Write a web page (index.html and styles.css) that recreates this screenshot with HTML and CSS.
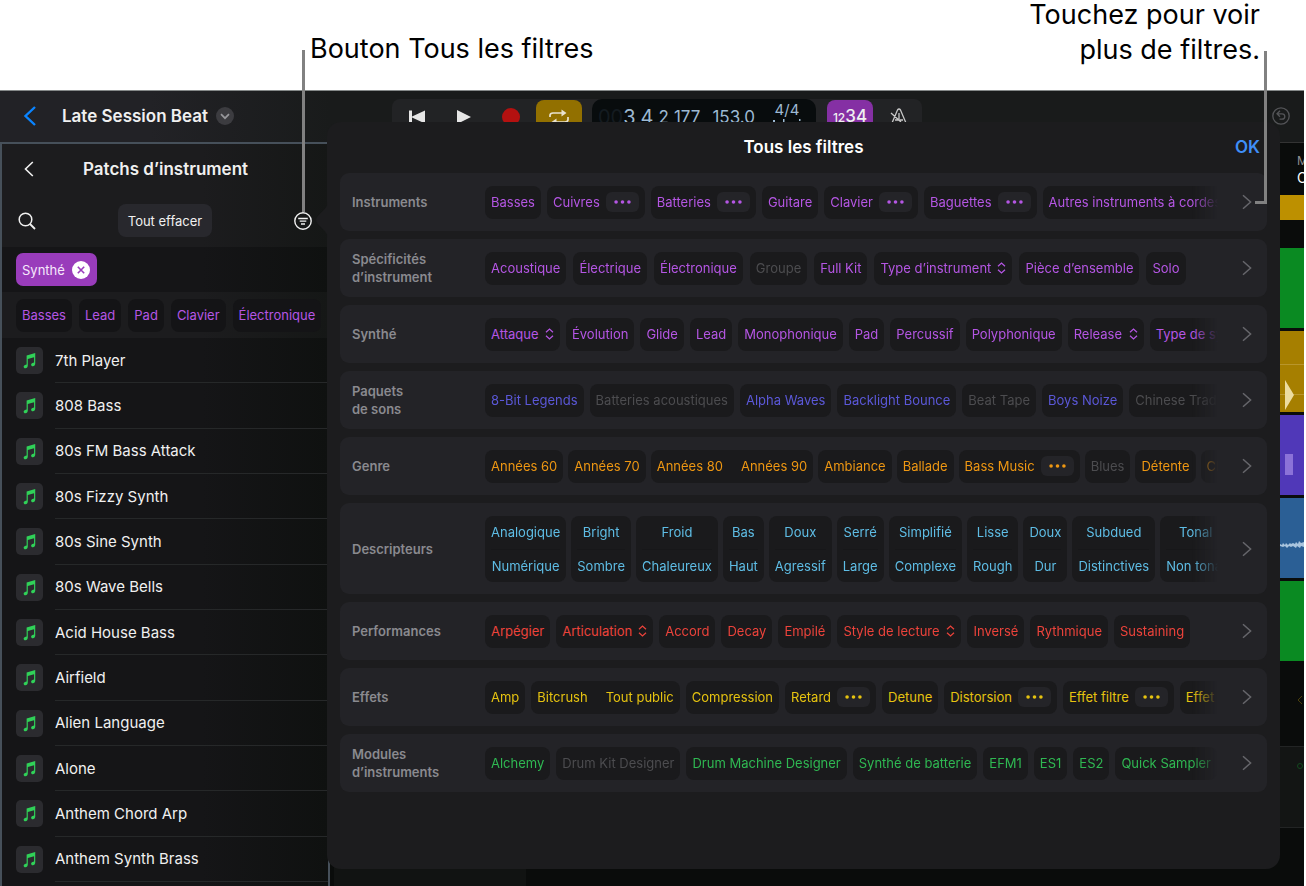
FILE: index.html
```html
<!DOCTYPE html>
<html lang="fr">
<head>
<meta charset="utf-8">
<title>Tous les filtres</title>
<link rel="stylesheet" href="styles.css">
</head>
<body>
<svg class="defs" aria-hidden="true">
  <symbol id="note" viewBox="0 0 14 16"><path d="M4.3 3.4 12.4 1v9.9c0 1.5-.9 2.5-2.2 2.6-1 .1-1.700-.5-1.700-1.400 0-1.100.9-1.700 2-1.900.6-.1.800-.3.800-.8V5L5.400 6.600v6.100c0 1.500-.9 2.500-2.200 2.600-1 .1-1.700-.5-1.700-1.400 0-1.100.9-1.700 2-1.900.6-.1.800-.3.800-.8z" fill="#30d158"/></symbol>
  <symbol id="next" viewBox="0 0 10 16"><path d="M1 1.200 8.600 8 1 14.800" fill="none" stroke="currentColor" stroke-width="1.500"/></symbol>
  <symbol id="dots" viewBox="0 0 18 4"><circle cx="2.200" cy="2" r="1.900"/><circle cx="9" cy="2" r="1.900"/><circle cx="15.800" cy="2" r="1.900"/></symbol>
  <symbol id="updown" viewBox="0 0 9 12"><path d="M1 4.300 4.500 1 8 4.300M1 7.700 4.500 11 8 7.700" fill="none" stroke="currentColor" stroke-width="1.200"/></symbol>
</svg>

<header class="captions">
  <p class="caption caption-left">Bouton Tous les filtres</p>
  <p class="caption caption-right">Touchez pour voir<br>plus de filtres.</p>
</header>

<main class="app">
  <div class="toolbar">
    <div class="project">
      <button class="icon-btn back" aria-label="Retour"><svg width="14" height="22" viewBox="0 0 14 22"><path d="M13 2 3.500 11 13 20" fill="none" stroke="#0a84ff" stroke-width="2.400"/></svg></button>
      <h1>Late Session Beat</h1>
      <button class="icon-btn project-menu" aria-label="Menu du projet"><svg width="18" height="18" viewBox="0 0 18 18"><circle cx="9" cy="9" r="9" fill="#3c3c40"/><path d="M5 7.200 9 11.200 13 7.200" fill="none" stroke="#98989c" stroke-width="1.700"/></svg></button>
    </div>
    <div class="transport">
      <button class="icon-btn" aria-label="Début"><svg width="18" height="16" viewBox="0 0 18 16"><path d="M1 1.500h3v6L17 1.500v13L4 8.500v6H1z" fill="#e6e6e6"/></svg></button>
      <button class="icon-btn" aria-label="Lecture"><svg width="14" height="16" viewBox="0 0 14 16"><path d="M0 1 14 8 0 15z" fill="#e6e6e6"/></svg></button>
      <button class="icon-btn" aria-label="Enregistrer"><svg width="18" height="18" viewBox="0 0 18 18"><circle cx="9" cy="9" r="9" fill="#b41110"/></svg></button>
      <button class="icon-btn loop" aria-label="Boucle"><svg width="20" height="18" viewBox="0 0 20 18"><path d="M1 8V6.500Q1 4 4 4h11M19 8v2.500q0 2.500-3 2.500H5" fill="none" stroke="#e9e2cf" stroke-width="1.700"/><path d="M12.500.5 17.500 4l-5 3.500zM7.500 9.500l-5 3.500 5 3.500z" fill="#e9e2cf"/></svg></button>
      <div class="lcd">
        <span class="big"><i>00</i>3</span><span class="big">4</span><span class="mid">2</span><span class="mid">177</span>
        <span class="tempo">153.0</span>
        <span class="sig">4/4<svg width="30" height="8" viewBox="0 0 30 8"><path d="M1 3h2v2H1zM11 2h1.500v3H11zM27 2h1.500v2H27z" fill="#9db9d2"/></svg></span>
      </div>
      <button class="icon-btn count"><small>12</small>34</button>
      <button class="icon-btn" aria-label="Métronome"><svg width="18" height="18" viewBox="0 0 18 18"><path d="M2 15 7.500 2Q9 0 10.500 2L16 15zM5 12h8M9 5v6M1 5l10 9" fill="none" stroke="#c8c8c8" stroke-width="1.300"/></svg></button>
    </div>
    <button class="icon-btn undo" aria-label="Annuler"><svg width="18" height="18" viewBox="0 0 18 18"><circle cx="9" cy="9" r="8.200" fill="none" stroke="#545558" stroke-width="1.300"/><path d="M8 3.800 5 6.800 8 9.800M5.200 6.800h4.800q2.800 0 2.800 2.700T10 12.200H7.500" fill="none" stroke="#545558" stroke-width="1.300"/></svg></button>
  </div>

  <div class="workspace">
    <aside class="sidebar">
      <div class="side-head">
        <button class="icon-btn side-back" aria-label="Retour"><svg width="10" height="16" viewBox="0 0 10 16"><path d="M8.800 1 1.500 8l7.300 7" fill="none" stroke="#f0f0f0" stroke-width="1.600"/></svg></button>
        <h2>Patchs d’instrument</h2>
      </div>
      <div class="side-tools">
        <button class="icon-btn" aria-label="Rechercher"><svg width="18" height="18" viewBox="0 0 18 18"><circle cx="7.500" cy="7.500" r="6.300" fill="none" stroke="#f0f0f0" stroke-width="1.500"/><path d="m12 12 5 5" stroke="#f0f0f0" stroke-width="1.800"/></svg></button>
        <button class="clear">Tout effacer</button>
        <button class="icon-btn" aria-label="Tous les filtres"><svg width="18" height="18" viewBox="0 0 18 18"><circle cx="9" cy="9" r="8.200" fill="none" stroke="#f0f0f0" stroke-width="1.400"/><path d="M4.200 6.500h9.600M5.700 9.200h6.600M7 12h4" stroke="#f0f0f0" stroke-width="1.300"/></svg></button>
      </div>
      <div class="active-filters">
        <button class="active-chip">Synthé<svg width="18" height="18" viewBox="0 0 18 18"><circle cx="9" cy="9" r="9" fill="#fff"/><path d="m5.800 5.800 6.400 6.400M12.200 5.800l-6.400 6.400" stroke="#993cbb" stroke-width="1.600"/></svg></button>
      </div>
      <div class="quick-filters purple">
        <button class="chip">Basses</button><button class="chip">Lead</button><button class="chip">Pad</button><button class="chip">Clavier</button><button class="chip">Électronique</button>
      </div>
      <ul class="patches">
        <li><svg><use href="#note"/></svg><span>7th Player</span></li>
        <li><svg><use href="#note"/></svg><span>808 Bass</span></li>
        <li><svg><use href="#note"/></svg><span>80s FM Bass Attack</span></li>
        <li><svg><use href="#note"/></svg><span>80s Fizzy Synth</span></li>
        <li><svg><use href="#note"/></svg><span>80s Sine Synth</span></li>
        <li><svg><use href="#note"/></svg><span>80s Wave Bells</span></li>
        <li><svg><use href="#note"/></svg><span>Acid House Bass</span></li>
        <li><svg><use href="#note"/></svg><span>Airfield</span></li>
        <li><svg><use href="#note"/></svg><span>Alien Language</span></li>
        <li><svg><use href="#note"/></svg><span>Alone</span></li>
        <li><svg><use href="#note"/></svg><span>Anthem Chord Arp</span></li>
        <li><svg><use href="#note"/></svg><span>Anthem Synth Brass</span></li>
      </ul>
    </aside>
    <div class="track-heads"></div>
    <div class="tracks">
      <div class="track-info"><span>M</span><b>O</b></div>
      <div class="cycle"></div>
      <div class="ruler"></div>
      <div class="region green-region"></div>
      <div class="region gold-region"><svg width="9" height="30" viewBox="0 0 9 30"><path d="M0 0 9 15 0 30z" fill="#ecdca0"/></svg></div>
      <div class="region violet-region"><i></i></div>
      <div class="region blue-region"><svg width="24" height="8" viewBox="0 0 24 8"><path d="M0 3 2 4 3 2 5 4 6 2 8 4 10 2 11 3 13 2 15 3 16 1 18 3 19 0 21 2 24 1V6L21 5 20 7 17 5 16 7 13 5 11 6 9 5 7 7 5 5 3 6 0 5z" fill="#a9c4de"/></svg></div>
      <div class="region green-region"></div>
      <div class="empty"><svg width="6" height="10" viewBox="0 0 6 10"><path d="M5 1 1 5l4 4" fill="none" stroke="#4a3f0c"/></svg></div>
      <div class="empty lit"><svg width="6" height="10" viewBox="0 0 6 10"><circle cx="3" cy="5" r="2.500" fill="none" stroke="#14481f"/></svg></div>
    </div>
  </div>

  <section class="dialog" aria-labelledby="dlg-title">
    <svg class="beak" width="13" height="36" viewBox="0 0 13 36"><path d="M13 0C13 7 1 13 1 18s12 11 12 18z" fill="#1c1c1e"/></svg>
    <header class="dialog-head">
      <h2 id="dlg-title">Tous les filtres</h2>
      <button class="ok">OK</button>
    </header>
    <div class="filters">
      <div class="row purple">
        <h3>Instruments</h3>
        <div class="strip">
          <button class="chip">Basses</button>
          <div class="chip"><button>Cuivres</button><button class="more" aria-label="Plus"><svg><use href="#dots"/></svg></button></div>
          <div class="chip"><button>Batteries</button><button class="more" aria-label="Plus"><svg><use href="#dots"/></svg></button></div>
          <button class="chip">Guitare</button>
          <div class="chip"><button>Clavier</button><button class="more" aria-label="Plus"><svg><use href="#dots"/></svg></button></div>
          <div class="chip"><button>Baguettes</button><button class="more" aria-label="Plus"><svg><use href="#dots"/></svg></button></div>
          <button class="chip">Autres instruments à cordes</button>
        </div>
        <button class="icon-btn next" aria-label="Suite"><svg><use href="#next"/></svg></button>
      </div>
      <div class="row purple loose">
        <h3>Spécificités d’instrument</h3>
        <div class="strip">
          <button class="chip">Acoustique</button>
          <button class="chip">Électrique</button>
          <button class="chip">Électronique</button>
          <button class="chip" disabled>Groupe</button>
          <button class="chip">Full Kit</button>
          <div class="chip"><select aria-label="Type d’instrument"><option>Type d’instrument</option></select><svg class="ud"><use href="#updown"/></svg></div>
          <button class="chip">Pièce d’ensemble</button>
          <button class="chip">Solo</button>
        </div>
        <button class="icon-btn next" aria-label="Suite"><svg><use href="#next"/></svg></button>
      </div>
      <div class="row purple">
        <h3>Synthé</h3>
        <div class="strip">
          <div class="chip"><select aria-label="Attaque"><option>Attaque</option></select><svg class="ud"><use href="#updown"/></svg></div>
          <button class="chip">Évolution</button>
          <button class="chip">Glide</button>
          <button class="chip">Lead</button>
          <button class="chip">Monophonique</button>
          <button class="chip">Pad</button>
          <button class="chip">Percussif</button>
          <button class="chip">Polyphonique</button>
          <div class="chip"><select aria-label="Release"><option>Release</option></select><svg class="ud"><use href="#updown"/></svg></div>
          <button class="chip">Type de synthé</button>
        </div>
        <button class="icon-btn next" aria-label="Suite"><svg><use href="#next"/></svg></button>
      </div>
      <div class="row indigo">
        <h3>Paquets<br>de sons</h3>
        <div class="strip">
          <button class="chip">8-Bit Legends</button>
          <button class="chip" disabled>Batteries acoustiques</button>
          <button class="chip">Alpha Waves</button>
          <button class="chip">Backlight Bounce</button>
          <button class="chip" disabled>Beat Tape</button>
          <button class="chip">Boys Noize</button>
          <button class="chip" disabled>Chinese Traditional</button>
        </div>
        <button class="icon-btn next" aria-label="Suite"><svg><use href="#next"/></svg></button>
      </div>
      <div class="row orange tight">
        <h3>Genre</h3>
        <div class="strip">
          <button class="chip">Années 60</button>
          <button class="chip">Années 70</button>
          <div class="chip pair"><button>Années 80</button><button>Années 90</button></div>
          <button class="chip">Ambiance</button>
          <button class="chip">Ballade</button>
          <div class="chip"><button>Bass Music</button><button class="more" aria-label="Plus"><svg><use href="#dots"/></svg></button></div>
          <button class="chip" disabled>Blues</button>
          <button class="chip">Détente</button>
          <button class="chip">Chill</button>
        </div>
        <button class="icon-btn next" aria-label="Suite"><svg><use href="#next"/></svg></button>
      </div>
      <div class="row cyan tight">
        <h3>Descripteurs</h3>
        <div class="strip">
          <div class="chip stack"><button>Analogique</button><button>Numérique</button></div>
          <div class="chip stack"><button>Bright</button><button>Sombre</button></div>
          <div class="chip stack"><button>Froid</button><button>Chaleureux</button></div>
          <div class="chip stack"><button>Bas</button><button>Haut</button></div>
          <div class="chip stack"><button>Doux</button><button>Agressif</button></div>
          <div class="chip stack"><button>Serré</button><button>Large</button></div>
          <div class="chip stack"><button>Simplifié</button><button>Complexe</button></div>
          <div class="chip stack"><button>Lisse</button><button>Rough</button></div>
          <div class="chip stack"><button>Doux</button><button>Dur</button></div>
          <div class="chip stack"><button>Subdued</button><button>Distinctives</button></div>
          <div class="chip stack"><button>Tonal</button><button>Non tonal</button></div>
        </div>
        <button class="icon-btn next" aria-label="Suite"><svg><use href="#next"/></svg></button>
      </div>
      <div class="row red">
        <h3>Performances</h3>
        <div class="strip">
          <button class="chip">Arpégier</button>
          <div class="chip"><select aria-label="Articulation"><option>Articulation</option></select><svg class="ud"><use href="#updown"/></svg></div>
          <button class="chip">Accord</button>
          <button class="chip">Decay</button>
          <button class="chip">Empilé</button>
          <div class="chip"><select aria-label="Style de lecture"><option>Style de lecture</option></select><svg class="ud"><use href="#updown"/></svg></div>
          <button class="chip">Inversé</button>
          <button class="chip">Rythmique</button>
          <button class="chip">Sustaining</button>
        </div>
        <button class="icon-btn next" aria-label="Suite"><svg><use href="#next"/></svg></button>
      </div>
      <div class="row yellow">
        <h3>Effets</h3>
        <div class="strip">
          <button class="chip">Amp</button>
          <div class="chip pair"><button>Bitcrush</button><button>Tout public</button></div>
          <button class="chip">Compression</button>
          <div class="chip"><button>Retard</button><button class="more" aria-label="Plus"><svg><use href="#dots"/></svg></button></div>
          <button class="chip">Detune</button>
          <div class="chip"><button>Distorsion</button><button class="more" aria-label="Plus"><svg><use href="#dots"/></svg></button></div>
          <div class="chip"><button>Effet filtre</button><button class="more" aria-label="Plus"><svg><use href="#dots"/></svg></button></div>
          <button class="chip">Effet lo-fi</button>
        </div>
        <button class="icon-btn next" aria-label="Suite"><svg><use href="#next"/></svg></button>
      </div>
      <div class="row green">
        <h3>Modules<br>d’instruments</h3>
        <div class="strip">
          <button class="chip">Alchemy</button>
          <button class="chip" disabled>Drum Kit Designer</button>
          <button class="chip">Drum Machine Designer</button>
          <button class="chip">Synthé de batterie</button>
          <button class="chip">EFM1</button>
          <button class="chip">ES1</button>
          <button class="chip">ES2</button>
          <button class="chip">Quick Sampler</button>
        </div>
        <button class="icon-btn next" aria-label="Suite"><svg><use href="#next"/></svg></button>
      </div>
    </div>
  </section>
</main>
<div class="lead lead-left"></div>
<div class="lead lead-right"></div>
</body>
</html>
```
FILE: styles.css
```css
* { box-sizing: border-box; }
body {
  margin: 0;
  height: 100vh;
  overflow: hidden;
  display: flex;
  flex-direction: column;
  position: relative;
  background: #fff;
  color: #f0f0f0;
  font-family: Inter, "Liberation Sans", sans-serif;
  font-size: 13px;
}
h1, h2, h3, p, ul { margin: 0; padding: 0; }
button, select {
  font: inherit;
  color: inherit;
  background: none;
  border: 0;
  padding: 0;
  margin: 0;
  white-space: nowrap;
}
select { appearance: none; }
.defs { position: absolute; width: 0; height: 0; }
.icon-btn { display: flex; align-items: center; justify-content: center; }

/* Captions above the app */
.captions {
  flex: 0 0 90px;
  display: flex;
  justify-content: space-between;
  padding: 0 46px 0 310px;
  color: #000;
  font-size: 27px;
  line-height: 35px;
}
.caption-left { padding-top: 31px; }
.caption-right { text-align: right; margin-top: -3px; }
.lead { position: absolute; border: 0 solid #818181; }
.lead-left { left: 302px; top: 50px; width: 3px; height: 162px; background: #818181; }
.lead-right { right: 39px; top: 51px; width: 12px; height: 153px; border-width: 0 3px 3px 0; }

/* App shell */
.app {
  flex: 1;
  min-height: 0;
  margin-right: 2px;
  position: relative;
  display: flex;
  flex-direction: column;
  background: #0a0c0b;
  border-top: 1px solid #858989;
}
.toolbar {
  flex: 0 0 51px;
  display: flex;
  align-items: stretch;
  padding: 0 14px 2px 0;
  background: linear-gradient(90deg, #222226 150px, #191b1b 330px);
}
.project { flex: 0 0 392px; display: flex; align-items: center; padding-left: 22px; }
.project h1 { margin: 0 8px 0 26px; font-size: 17px; font-weight: 600; }
.transport {
  flex: 0 0 530px;
  display: flex;
  margin-top: 8px;
  padding-left: 1px;
  background: #222325;
  border-radius: 8px 8px 0 0;
}
.transport .icon-btn { flex: 0 0 47px; height: 36px; }
.transport .loop { flex-basis: 46px; margin: 1px 10px 0 2px; border-radius: 8px; background: #927000; }
.transport .count {
  flex-basis: 46px;
  align-items: baseline;
  margin: 1px 2px 0 11px;
  padding-top: 6px;
  border-radius: 8px;
  background: #8530a4;
  font-size: 17px;
  font-weight: 500;
}
.count small { font-size: 12px; }
.lcd {
  flex: 1;
  display: flex;
  gap: 5px;
  padding: 4px 14px 0 6px;
  background: #080c0d;
  border-radius: 10px 10px 0 0;
  color: #9db9d2;
  line-height: 28px;
}
.lcd i { font-style: normal; color: #141b20; }
.big { font-size: 20px; }
.mid { font-size: 17px; }
.tempo { font-size: 17px; margin-left: 7px; }
.sig { font-size: 15px; line-height: 14px; margin-left: auto; display: flex; flex-direction: column; align-items: center; }
.undo { margin-left: auto; }

.workspace { flex: 1; min-height: 0; display: flex; }
.sidebar {
  flex: 0 0 330px;
  display: flex;
  flex-direction: column;
  border: 2px solid #46505a;
  border-bottom: 0;
  background: linear-gradient(90deg, #151517 200px, #0f1110);
}
.side-head, .side-tools, .quick-filters { background: linear-gradient(90deg, #1c1c1e 200px, #151716); }
.side-head { flex: 0 0 50px; display: flex; align-items: center; padding: 0 22px; }
.side-head h2 { margin-left: 49px; font-size: 17px; font-weight: 600; }
.side-tools { flex: 0 0 53px; display: flex; align-items: center; justify-content: space-between; padding: 0 16px; }
.clear { height: 33px; padding: 0 10px; border-radius: 8px; background: #28282d; }
.active-filters { flex: 0 0 45px; display: flex; align-items: center; padding-left: 14px; }
.active-chip {
  height: 33px;
  padding: 0 7px 0 6px;
  border-radius: 7px;
  background: #993cbb;
  color: #f6e8fb;
  display: flex;
  align-items: center;
  gap: 7px;
}
.quick-filters { flex: 0 0 46px; display: flex; align-items: center; gap: 7px; padding-left: 14px; }
.quick-filters .chip { background: #141416; }
.patches { flex: 1; display: flex; flex-direction: column; list-style: none; padding-bottom: 4px; font-size: 15px; }
.patches li { flex: 1; display: flex; align-items: center; gap: 12px; padding-left: 14px; }
.patches svg { flex: 0 0 27px; height: 27px; padding: 5px 6px; border-radius: 5px; background: #2b2b2f; }
.patches span { flex: 1; align-self: stretch; display: flex; align-items: center; border-bottom: 1px solid #262829; }

.track-heads { flex: 0 0 196px; margin-left: 4px; border-right: 4px solid #0a0c0b; background: #111312; }
.tracks { flex: 0 0 24px; margin-left: auto; overflow: hidden; display: flex; flex-direction: column; border-top: 1px solid #333; }
.track-info { flex: 0 0 52px; padding: 9px 0 0 17px; display: flex; flex-direction: column; font-size: 12px; line-height: 17px; color: #909090; }
.track-info b { font-weight: 400; font-size: 14px; color: #fff; }
.cycle { flex: 0 0 25px; background: #bd9000; }
.ruler { flex: 0 0 28px; }
.region { flex: 0 0 80px; margin-bottom: 3px; overflow: hidden; display: flex; align-items: center; }
.green-region { background: #0a8a22; }
.gold-region {
  flex-basis: 81px;
  padding: 46px 0 0 5px;
  background: linear-gradient(#b8962c, #b8962c) 0 33px / 100% 1px no-repeat, linear-gradient(#b8962c, #b8962c) 0 63px / 100% 1px no-repeat, #a67f00;
}
.violet-region { background: #5038b8; padding: 18px 0 0 5px; }
.violet-region i { width: 8px; height: 21px; background: #8b72d8; }
.blue-region { background: #2b5f95; padding-top: 14px; }
.empty { flex: 0 0 82px; padding: 28px 0 0 17px; }
.lit { padding-top: 11px; border: 1px solid #222424; border-width: 1px 0; background: #131514; }

/* Filter dialog */
.dialog {
  position: absolute;
  left: 327px;
  right: 24px;
  top: 31px;
  bottom: 17px;
  padding: 0 13px;
  border-radius: 14px;
  background: #1c1c1e;
}
.beak { position: absolute; left: -12px; top: 80px; }
.dialog-head { height: 51px; display: flex; align-items: center; justify-content: flex-end; padding: 0 7px 1px 0; }
.dialog-head h2 { flex: 1; padding-left: 32px; text-align: center; font-size: 17px; font-weight: 600; color: #fff; }
.ok { color: #3f8ef7; font-size: 17px; font-weight: 600; }
.filters { display: flex; flex-direction: column; gap: 8px; }
.row { min-height: 58px; display: flex; align-items: center; padding: 11px 15px 11px 12px; border-radius: 9px; background: #232327; }
.row:has(.stack) { min-height: 91px; }
.row h3 { flex: 0 0 133px; padding-right: 20px; font-size: 13px; line-height: 18px; font-weight: 600; color: #8a8a8f; }
.strip {
  flex: 1;
  min-width: 0;
  overflow: hidden;
  display: flex;
  gap: 6px;
  mask-image: linear-gradient(90deg, #000 calc(100% - 30px), transparent calc(100% - 4px));
}
.tight .strip { gap: 5px; }
.loose .strip { gap: 7px; }
.chip {
  flex: none;
  min-height: 33px;
  padding: 0 6px;
  border-radius: 8px;
  background: #1a1a1c;
  display: flex;
  align-items: center;
  gap: 6px;
}
.chip:disabled { color: #4c4c4f; }
.more { width: 33px; height: 20px; border-radius: 6px; background: #242428; display: flex; align-items: center; justify-content: center; }
.more svg { width: 17px; height: 4px; fill: currentColor; }
.ud { width: 9px; height: 12px; }
.pair { gap: 18px; }
.stack { flex-direction: column; align-items: stretch; gap: 0; }
.stack button { height: 33px; }
.stack button + button { border-top: 1px solid #171719; }
.next { flex: 0 0 10px; margin-left: 20px; color: #66666b; }
.next svg { width: 10px; height: 16px; }

.purple { color: #b556e4; }
.indigo { color: #5b58d8; }
.orange { color: #ee9712; }
.cyan { color: #5ebde5; }
.red { color: #ec433b; }
.yellow { color: #e6c310; }
.green { color: #2fb852; }
```
